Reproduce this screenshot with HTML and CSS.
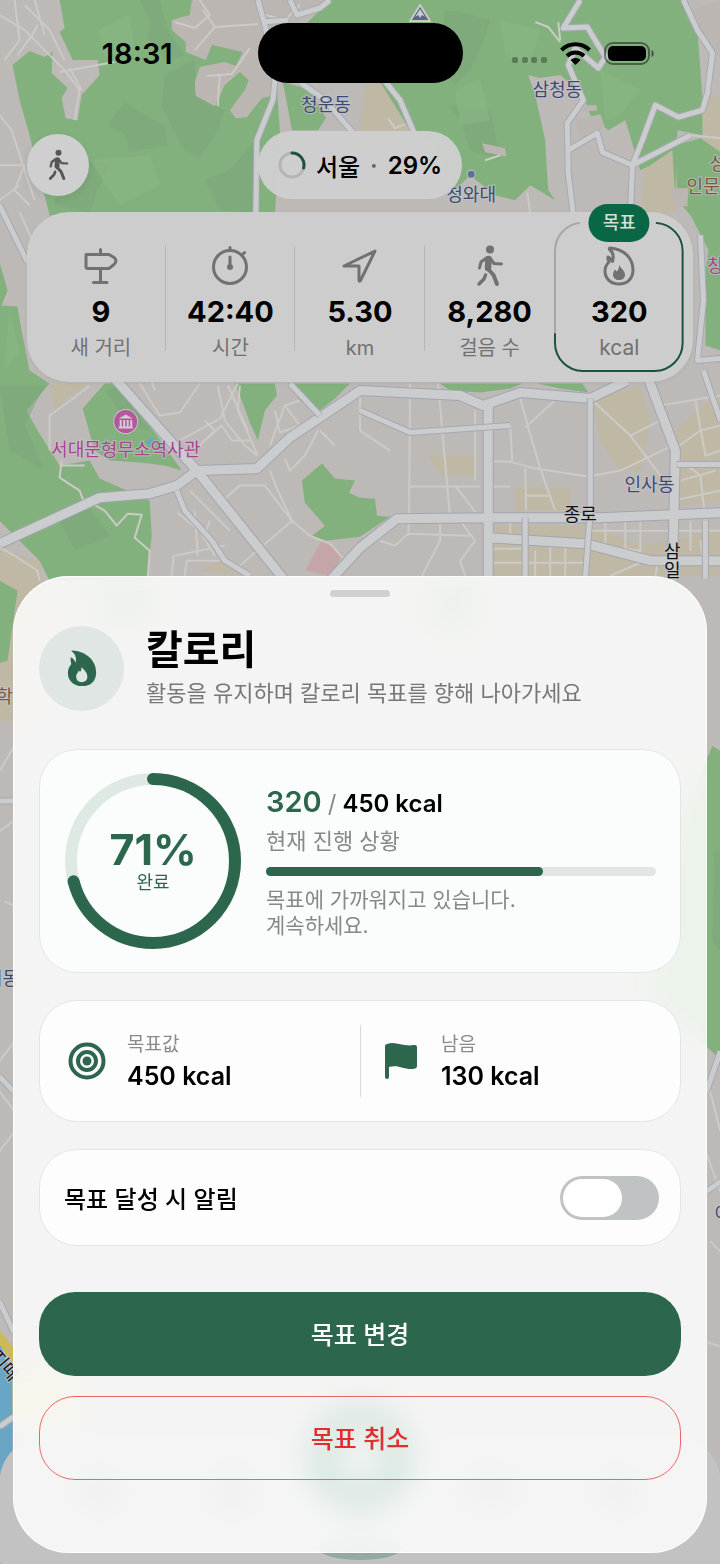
FILE: index.html
```html
<!DOCTYPE html>
<html lang="ko">
<head>
    <meta charset="UTF-8">
    <meta name="viewport" content="width=device-width, initial-scale=1.0">
    <title>칼로리 목표</title>
    <link rel="stylesheet" href="styles.css">
</head>
<body>
    <!-- Shared icon shapes -->
    <svg class="defs" width="0" height="0" aria-hidden="true">
        <symbol id="icon-walk" viewBox="0 0 28 42">
            <g fill="none" stroke="currentColor" stroke-linecap="round" stroke-linejoin="round">
                <path stroke-width="6.500" d="M12.500 14 L12 23"/>
                <path stroke-width="3" d="M10.500 13 L5 17 L3.500 23"/>
                <path stroke-width="3" d="M14 13 L18 18.500 L25.500 19"/>
                <path stroke-width="4" d="M12 24 L17.500 30 L21 39"/>
                <path stroke-width="3.500" d="M9.500 30 L8 34 L3 39"/>
            </g>
            <circle cx="14" cy="4.500" r="4" fill="currentColor"/>
        </symbol>
        <symbol id="icon-flame" viewBox="0 0 30 38">
            <path fill-rule="evenodd" d="M5 .500 C17 1 29.500 9 29.500 23 C29.500 32 24 37 15 37 C6 37 .500 31 .500 23.500 C.500 20 2 17 4 14.500 C3.500 12 3 9.500 3.500 7.500 C6 8.500 7.500 10.500 8.500 13 C9.500 9 8.500 4 4.500 1.500 C4 .900 4.300 .500 5 .500 Z M14.500 17.500 C14.500 20.500 14 21.500 13 22.500 C12.500 21.800 12 21.300 11.500 21 C11.300 23.500 9 24 9 27.500 C9 31 11.500 33 14.700 33 C18 33 20.500 31 20.500 27.500 C20.500 23 17.500 21 14.500 17.500 Z"/>
        </symbol>
    </svg>

    <!-- Map -->
    <svg class="map" viewBox="0 0 720 1564" preserveAspectRatio="xMidYMin slice" aria-hidden="true">
        <rect class="land" width="720" height="1564"/>
        <g class="block">
            <path d="M365 82 L385 82 L415 131 L360 131 Z M645 160 L675 150 L675 212 L640 212 Z M700 95 L720 95 L720 155 L702 145 Z"/>
            <path d="M50 383 L90 383 L70 395 L55 410 Z M428 455 L475 455 L476 475 L440 475 Z M515 487 L570 487 L570 510 L515 510 Z M592 400 L640 385 L650 420 L640 470 L620 470 L600 440 Z M675 430 L720 390 L720 500 L680 505 Z M490 525 L590 525 L640 545 L720 530 L720 575 L490 575 Z M0 548 L40 560 L50 640 L20 720 L0 720 Z M200 570 L220 560 L250 575 Z"/>
        </g>
        <g class="wood">
            <path d="M60 0 L65 28 L60 32 L73 60 L98 60 L100 75 L82 95 L78 120 L66 118 L62 98 L68 88 L52 73 L53 52 L45 57 L30 51 L13 65 L20 100 L30 135 L45 195 L50 215 L275 215 L280 130 L275 60 L262 0 Z"/>
            <path d="M330 0 L680 0 L697 30 L700 70 L702 100 L702 135 L677 130 L675 200 L672 150 L650 165 L640 170 L625 120 L608 130 L590 115 L583 95 L560 75 L540 78 L528 75 L535 95 L545 140 L546 160 L548 190 L555 200 L530 185 L515 200 L495 195 L470 175 L455 190 L430 140 L410 130 L380 82 L310 82 L300 30 Z"/>
            <path d="M675 145 L700 138 L720 152 L720 350 L705 345 L705 270 L708 250 L690 215 L677 200 Z"/>
            <path d="M283 82 L310 90 L326 118 L318 130 L292 130 Z"/>
            <path d="M0 262 L8 290 L2 305 L18 306 L22 330 L30 370 L50 383 L27 410 L38 430 L60 465 L90 460 L100 478 L150 500 L152 535 L147 580 L50 580 L40 560 L20 540 L0 520 Z"/>
            <path d="M83 408 L105 383 L120 383 L182 470 L165 465 L140 462 L110 460 L95 450 Z"/>
            <path d="M235 383 L275 383 L277 395 L265 410 L258 440 L250 422 L242 400 Z M288 383 L350 383 L335 398 L320 410 L300 400 Z"/>
            <path d="M302 480 L322 463 L335 478 L355 480 L349 492 L360 497 L375 498 L377 515 L390 516 L360 536 L325 540 L312 535 L325 525 L305 502 Z"/>
            <path d="M440 383 L522 383 L510 388 L480 392 L450 390 Z M537 383 L582 383 L588 392 L560 388 Z"/>
            <path d="M0 580 L18 590 L8 660 L0 662 Z M100 590 L150 590 L150 620 L100 620 Z M430 585 L475 585 L475 625 L430 625 Z M712 745 L720 750 L720 1058 L640 985 L660 970 L675 830 Z"/>
        </g>
        <g class="wood-shade">
            <path d="M125 102 L150 118 L165 125 L168 145 L150 148 L130 152 L126 135 L108 125 Z M165 75 L195 60 L195 95 L225 110 L218 130 L200 158 L185 150 L172 125 L162 105 Z M140 0 L150 20 L148 38 L165 60 L185 55 L168 30 L160 0 Z M445 10 L468 14 L490 20 L482 45 L470 70 L455 85 L432 60 L442 35 Z M450 105 L490 110 L500 160 L470 150 L462 125 Z M60 160 L85 158 L110 165 L98 190 L90 212 L55 205 Z M205 180 L230 170 L255 140 L255 212 L220 210 Z"/>
            <path d="M0 385 L45 385 L25 425 L45 470 L10 450 Z M60 520 L90 508 L110 535 L75 550 Z M105 390 L120 385 L150 430 L130 425 Z M714 850 L720 850 L720 950 L712 940 Z"/>
        </g>
        <g class="wood-light">
            <path d="M98 30 L130 15 L135 50 L105 58 Z M90 160 L150 155 L160 185 L120 205 Z M455 90 L480 80 L490 120 L460 125 Z M600 70 L640 90 L620 115 L605 120 Z M10 310 L20 350 L5 370 Z M500 20 L540 30 L530 65 L505 55 Z"/>
        </g>
        <g class="town">
            <path d="M192 0 L190 15 L172 20 L172 30 L186 42 L186 52 L206 60 L212 45 L243 52 L236 66 L225 62 L200 67 L195 82 L196 96 L215 106 L225 85 L240 72 L249 80 L245 90 L230 110 L236 118 L247 117 L262 98 L274 95 L270 30 L315 15 L330 0 Z"/>
            <path d="M482 143 L505 148 L506 156 L485 152 Z M585 105 L596 105 L597 110 L580 112 Z M575 120 L600 114 L605 128 L580 138 Z M686 12 L720 0 L720 60 L705 40 Z M670 188 L688 188 L687 206 L673 206 Z"/>
        </g>
        <path class="hospital" d="M305 570 L322 540 L343 553 L330 575 Z"/>
        <path class="water" d="M0 1340 L13 1375 L13 1564 L0 1564 Z M145 441 L154 437 L151 446 Z"/>
        <rect class="river-glow" x="13" y="1370" width="60" height="50"/>

        <g class="lane">
            <path d="M0 15 L25 30 L65 70 L80 90 L75 120 M15 0 L20 40 L5 60 M25 5 L50 30 L65 60 M35 0 L45 35 M60 72 L115 62 M82 90 L70 68 M0 115 L12 130 L35 200 M0 165 L25 165 L15 190 L30 205 M0 200 L20 185 M175 22 L195 28 L210 15 L200 0 M195 50 L215 27 L258 24 M215 27 L203 10 M207 76 L232 74 L250 48 M220 74 L218 106 M30 40 L38 25 M18 55 L30 38"/>
            <path d="M535 22 L548 27 L560 42 M558 22 L560 40 M265 15 L285 20 L300 5 M388 118 L395 128 L405 124 M485 160 L500 155 M690 135 L720 138 M527 192 L530 212 M20 212 L35 245 L25 260 M70 160 L60 175"/>
            <path d="M50 450 L50 415 L75 397 L90 385 M62 460 L60 477 L80 490 L83 498 L105 510 L117 525 L128 513 L142 514 L135 537 L150 550 L148 578 M60 465 L85 465 M0 547 L15 555 L38 570 L40 580"/>
            <path d="M140 383 L160 415 L180 412 L200 383 M155 390 L150 375 M180 440 L220 418 L238 383 M205 440 L222 425 L232 440 L250 440 M218 385 L225 420 L245 445 L258 455 M240 385 L238 410 L258 455 M228 385 L248 430 M200 445 L215 430 L205 420 M178 512 L200 530 L215 555 M190 490 L230 530 M195 510 L198 555 M172 575 L174 555 L225 545 M185 575 L187 560 L220 560 M210 520 L205 535 M225 498 L240 485 L265 485 L292 520 L310 535 L330 543 L343 557 M270 470 L278 490 L292 520 L240 565 M285 405 L300 400 M275 410 L280 432 L300 425 L285 405 L270 445 M320 430 L335 445 M318 430 L305 455 L290 470 L285 458"/>
            <path d="M360 430 L378 442 L390 450 M410 383 L409 518 M438 383 L450 518 M360 397 L360 430 M409 486 L480 486 M475 410 L475 480 M455 485 L475 511 M488 461 L510 461 L535 468 L588 476 L620 470 L672 445 M510 425 L512 460 M520 398 L528 427 L540 468 L555 510 M525 427 L560 395 M525 468 L526 510 M526 495 L550 495 M488 486 L510 486 M590 398 L630 435 L660 475 M630 435 L660 420 M660 405 L720 395 M672 450 L700 430 L720 425 M680 460 L700 475 L705 520 M680 480 L715 470 M672 500 L720 490 M695 400 L705 455 L720 450 M700 540 L705 575"/>
            <path d="M380 540 L395 545 L408 533 L470 535 M409 518 L408 535 M440 520 L440 540 L422 575 M460 520 L475 540 L460 560 L465 575 M510 517 L510 535 M525 520 L524 575 M605 520 L605 545 M625 520 L625 550 M590 530 L720 530 M600 545 L640 550 M640 520 L640 555 M535 550 L535 575 M550 545 L550 575 M565 545 L565 575 M490 548 L525 548 M490 562 L590 562 M610 575 L640 562 M690 520 L690 550 M655 575 L658 560"/>
            <path d="M0 770 L15 745 M0 830 L14 820 M5 900 L15 905 M0 1060 L15 1040 M0 1090 L15 1110 M0 1150 L15 1130 M707 1080 L720 1130 M705 1150 L720 1190 M710 1240 L720 1250 M706 1340 L720 1345"/>
        </g>

        <g class="road-edge">
            <path d="M0 543 L100 497 L150 493 L177 485 L197 470 L257 468 L290 437 L320 417 L360 390 L460 395 L483 405 L520 392 L590 398 L627 380 M115 378 L197 470 L285 580 M488 405 L488 580 M330 580 L360 547 L397 518 L488 517 L600 517 L720 512 M648 378 L675 450 L672 580 M488 537 L585 543 L650 560 L720 560"/>
        </g>
        <g class="road-fill">
            <path d="M0 543 L100 497 L150 493 L177 485 L197 470 L257 468 L290 437 L320 417 L360 390 L460 395 L483 405 L520 392 L590 398 L627 380 M115 378 L197 470 L285 580 M488 405 L488 580 M330 580 L360 547 L397 518 L488 517 L600 517 L720 512 M648 378 L675 450 L672 580 M488 537 L585 543 L650 560 L720 560"/>
        </g>
        <g class="street-edge">
            <path d="M258 0 L265 25 L275 80 L273 100 L257 140 L256 215 M288 20 L262 22 M290 0 L297 15 L320 8 L330 0 M300 82 L325 100 L355 135 M380 75 L400 100 L415 135 M580 0 L563 28 L587 27 L605 57 L598 68 L575 48 L568 65 L583 100 L567 123 L568 173 L573 215 M683 0 L697 30 L712 53 L707 93 L702 110 L678 117 L655 105 L642 140 L632 165 L630 215 M568 150 L597 133 L602 152 L632 165 L690 135 M0 205 L28 262 M700 235 L703 300 L697 360 L720 358 M290 383 L320 415 M177 490 L185 510 L212 540 L225 560 L250 575 M360 410 L410 432 L510 425 M590 398 L590 510 L585 578 M525 517 L525 578 M676 464 L720 464 M705 520 L705 578 M703 370 L720 420 M0 800 L14 800 M0 1075 L14 1090 M0 1300 L14 1330 M720 1050 L706 1090 M706 1190 L720 1180 M0 1425 L14 1415"/>
        </g>
        <g class="street-fill">
            <path d="M258 0 L265 25 L275 80 L273 100 L257 140 L256 215 M288 20 L262 22 M290 0 L297 15 L320 8 L330 0 M300 82 L325 100 L355 135 M380 75 L400 100 L415 135 M580 0 L563 28 L587 27 L605 57 L598 68 L575 48 L568 65 L583 100 L567 123 L568 173 L573 215 M683 0 L697 30 L712 53 L707 93 L702 110 L678 117 L655 105 L642 140 L632 165 L630 215 M568 150 L597 133 L602 152 L632 165 L690 135 M0 205 L28 262 M700 235 L703 300 L697 360 L720 358 M290 383 L320 415 M177 490 L185 510 L212 540 L225 560 L250 575 M360 410 L410 432 L510 425 M590 398 L590 510 L585 578 M525 517 L525 578 M676 464 L720 464 M705 520 L705 578 M703 370 L720 420 M0 800 L14 800 M0 1075 L14 1090 M0 1300 L14 1330 M720 1050 L706 1090 M706 1190 L720 1180 M0 1425 L14 1415"/>
        </g>
        <path class="highway" d="M-4 1330 L20 1362"/>

        <g class="place">
            <text x="326" y="111">청운동</text>
            <text x="557" y="96">삼청동</text>
            <text x="471" y="201">청와대</text>
            <text x="649" y="490">인사동</text>
            <text x="3" y="984">리동</text>
            <text x="722" y="1218">이</text>
        </g>
        <g class="place campus">
            <text x="734" y="170">성균관</text>
            <text x="711" y="193">인문사</text>
            <text x="5" y="702">학</text>
        </g>
        <g class="place poi">
            <text x="126" y="455">서대문형무소역사관</text>
            <text x="715" y="272">창</text>
        </g>
        <g class="place street-name">
            <text x="580" y="520">종로</text>
            <text x="672" y="557">삼</text>
            <text x="672" y="576">일</text>
            <text x="5" y="1370" transform="rotate(50 5 1364)">지떼</text>
        </g>
        <circle cx="471" cy="174" r="4" fill="#5d7290" stroke="#bfc2bf"/>
        <path d="M420 5 L430 21 L410 21 Z" fill="#566882" stroke="#c8cccb" stroke-width="2" stroke-linejoin="round"/>
        <path d="M420 9 L425 17 L422 15 L420 18 L418 15 L415 17 Z" fill="#c8cccb"/>
        <circle cx="126" cy="421" r="12" fill="#b4579f" stroke="#cdbfc9"/>
        <path d="M119 418 L126 414 L133 418 Z M120 419.500 H122 V426 H120 Z M123.500 419.500 H125.500 V426 H123.500 Z M127 419.500 H129 V426 H127 Z M130.500 419.500 H132.500 V426 H130.500 Z M119 426 H133 V428 H119 Z" fill="#d6cbd3"/>

        <!-- Tab bar that shows through the sheet -->
        <rect class="tabbar" x="0" y="1436" width="720" height="160" rx="44"/>
        <g class="tabbar-icons">
            <rect x="80" y="1470" width="40" height="40" rx="16"/>
            <rect x="212" y="1470" width="40" height="40" rx="8"/>
            <rect x="465" y="1470" width="48" height="34" rx="8"/>
            <rect x="600" y="1470" width="36" height="40" rx="12"/>
        </g>
        <circle class="tabbar-main" cx="360" cy="1455" r="56"/>
        <rect x="345" y="1435" width="30" height="40" rx="10" fill="#cccccc"/>
        <ellipse cx="360" cy="1546" rx="42" ry="12" fill="#93aaa0"/>
    </svg>

    <div class="screen">
        <div class="status-bar">
            <span class="time">18:31</span>
            <span class="island"></span>
            <svg class="status-icons" width="144" height="28" viewBox="0 0 144 28" aria-hidden="true">
                <g fill="#000" opacity=".3">
                    <rect x="1" y="18" width="6" height="6" rx="2"/><rect x="11" y="18" width="6" height="6" rx="2"/>
                    <rect x="20" y="18" width="6" height="6" rx="2"/><rect x="30" y="18" width="6" height="6" rx="2"/>
                </g>
                <g fill="none" stroke="#000" stroke-width="4">
                    <path d="M50.500 11 A20 20 0 0 1 78.500 11"/>
                    <path d="M56 17 A12 12 0 0 1 73 17"/>
                </g>
                <path d="M64.500 26 L59.500 21 A7 7 0 0 1 69.500 21 Z"/>
                <rect x="94" y="4" width="44" height="21" rx="8" fill="none" stroke="#000" stroke-opacity=".45" stroke-width="2"/>
                <rect x="97" y="7" width="38" height="15" rx="5"/>
                <path d="M140.500 11 C143.500 12 143.500 17 140.500 18 Z" opacity=".5"/>
            </svg>
        </div>

        <div class="map-controls">
            <button class="round-btn" type="button" aria-label="걷기">
                <svg width="21" height="32"><use href="#icon-walk"/></svg>
            </button>
            <div class="city-pill">
                <svg width="28" height="28" viewBox="0 0 28 28" fill="none" stroke-width="3" aria-hidden="true">
                    <circle cx="14" cy="14" r="12" stroke="#b3b5b5"/>
                    <path d="M14 2 A12 12 0 0 1 25.600 17" stroke="#1d523d" stroke-linecap="round"/>
                </svg>
                <span class="city">서울</span><span class="dot">·</span><span>29%</span>
            </div>
        </div>

        <div class="stats">
            <div class="stat">
                <svg width="40" height="40" viewBox="0 0 40 40" aria-hidden="true">
                    <path d="M5 8.500 H28 L33 11.500 Q37 14.500 33 18.500 L28 22.500 H7 Q5 22.500 5 20.500 V10.500 Q5 8.500 7 8.500 M19.500 8 V3.500 M19.500 23 V36 M12.500 36.500 H26"/>
                </svg>
                <strong>9</strong>
                <span>새 거리</span>
            </div>
            <div class="stat">
                <svg width="40" height="40" viewBox="0 0 40 40" aria-hidden="true">
                    <circle cx="20" cy="21" r="16.500"/>
                    <path d="M20 4 V1.500 M32.500 8.500 L34.500 6.500 M20 11 V20"/>
                    <circle class="solid" cx="20" cy="21" r="3"/>
                </svg>
                <strong>42:40</strong>
                <span>시간</span>
            </div>
            <div class="stat">
                <svg width="40" height="40" viewBox="0 0 40 40" aria-hidden="true">
                    <path d="M35 5 L4 20 H19 V34.500 Q19.500 36 20.500 34.500 Z"/>
                </svg>
                <strong>5.30</strong>
                <span>km</span>
            </div>
            <div class="stat">
                <svg class="glyph" width="28" height="42" aria-hidden="true"><use href="#icon-walk"/></svg>
                <strong>8,280</strong>
                <span>걸음 수</span>
            </div>
            <div class="stat goal">
                <svg width="40" height="40" viewBox="0 0 40 40" aria-hidden="true">
                    <path d="M11 2 C25 3 34 12 34 24 C34 33 28 38 20 38 C11 38 6 32 6 25 C6 21 8 18 10 16 Q8.500 13 9 11 Q11.500 12 13.500 15.500 C15 10 14 6 10.500 3.500 Q10 2.300 11 2 Z"/>
                    <path class="solid" d="M20 18.500 C21 22 26 24 26 29 C26 32 23.500 34 20 34 C16.500 34 14 32 14 28.500 C14 26 15.500 25 15.500 23.500 Q17 24 17.500 25.500 Q20.500 23 20 18.500 Z"/>
                </svg>
                <strong>320</strong>
                <span>kcal</span>
                <svg class="goal-outline" viewBox="0 0 130 150" preserveAspectRatio="none" aria-hidden="true">
                    <path class="rest" d="M1 112 V29 A28 28 0 0 1 25 1"/>
                    <path class="done" d="M103 1 A28 28 0 0 1 129 29 V121 A28 28 0 0 1 101 149 H29 A28 28 0 0 1 1 121 V112"/>
                </svg>
                <em class="goal-badge">목표</em>
            </div>
        </div>

        <main class="sheet">
            <div class="handle"></div>

            <header class="sheet-header">
                <div class="sheet-icon"><svg width="30" height="37"><use href="#icon-flame"/></svg></div>
                <div>
                    <h1>칼로리</h1>
                    <p>활동을 유지하며 칼로리 목표를 향해 나아가세요</p>
                </div>
            </header>

            <section class="card progress-card">
                <div class="ring">
                    <svg viewBox="0 0 178 178" aria-hidden="true">
                        <circle class="ring-track" cx="89" cy="89" r="82"/>
                        <circle class="ring-value" cx="89" cy="89" r="82" pathLength="100" stroke-dasharray="71 100" transform="rotate(-90 89 89)"/>
                    </svg>
                    <div class="ring-text"><strong>71%</strong><span>완료</span></div>
                </div>
                <div class="progress-info">
                    <p class="amount"><b>320</b> <i>/</i> 450 kcal</p>
                    <p class="caption">현재 진행 상황</p>
                    <div class="bar"><div class="bar-fill" style="width: 71%"></div></div>
                    <p class="hint">목표에 가까워지고 있습니다.<br>계속하세요.</p>
                </div>
            </section>

            <section class="card values-card">
                <div class="value">
                    <svg width="38" height="38" viewBox="0 0 38 38" fill="none" stroke="currentColor" stroke-width="4" aria-hidden="true">
                        <circle cx="19" cy="19" r="16.500"/><circle cx="19" cy="19" r="9"/>
                        <circle cx="19" cy="19" r="4.500" fill="currentColor" stroke="none"/>
                    </svg>
                    <div><span>목표값</span><strong>450 kcal</strong></div>
                </div>
                <div class="value">
                    <svg width="38" height="38" viewBox="0 0 38 38" fill="currentColor" aria-hidden="true">
                        <path d="M3 4 Q3 2.500 5 2 C14 -1.500 20 5 32 3 Q35 2.500 35 5 V24 Q35 26 33 26.500 C23 29 18 22 7 25 V35 Q7 37 5 37 Q3 37 3 35 Z"/>
                    </svg>
                    <div><span>남음</span><strong>130 kcal</strong></div>
                </div>
            </section>

            <section class="card notify-card">
                <label for="goalNotify">목표 달성 시 알림</label>
                <input type="checkbox" role="switch" id="goalNotify" class="switch">
            </section>

            <div class="actions">
                <button class="change-btn" type="button">목표 변경</button>
                <button class="cancel-btn" type="button">목표 취소</button>
            </div>
        </main>
    </div>
</body>
</html>
```

FILE: styles.css
```css
* { box-sizing: border-box; }
body { margin: 0; position: relative; background: #bcb8b5; color: #000; font-family: Inter, "Noto Sans CJK KR", sans-serif; font-size: 22px; }
h1, p { margin: 0; }
button { font-family: inherit; cursor: pointer; }
.defs { position: absolute; }

/* Map */
.map { position: absolute; left: 0; top: 0; width: 100%; height: 100%; }
.land { fill: #bdb9b7; }
.block { fill: #bfb8a5; }
.town { fill: #bcb6b3; }
.wood { fill: #83b17e; }
.wood-shade { fill: #7ba377; opacity: 0.5; }
.wood-light { fill: #8ab886; opacity: 0.6; }
.water { fill: #69a5c4; }
.river-glow { fill: #cfc98a; }
.hospital { fill: #c5a5a8; }
.lane { fill: none; stroke: #cbcac7; stroke-width: 2; stroke-linejoin: round; }
.road-edge, .road-fill, .street-edge, .street-fill { fill: none; stroke-linejoin: round; }
.road-edge { stroke: #a2a5b0; stroke-width: 11; }
.road-fill { stroke: #cbccce; stroke-width: 9; }
.street-edge { stroke: #a6a9b2; stroke-width: 7; }
.street-fill { stroke: #cbccce; stroke-width: 5; }
.highway { stroke: #cdb957; stroke-width: 9; }
.place { font-size: 18px; text-anchor: middle; fill: #3d4a70; stroke: #c6c8cb; stroke-width: 2; stroke-opacity: 0.7; paint-order: stroke; }
.campus { fill: #805640; }
.poi { fill: #a84291; }
.street-name { fill: #111; }
.tabbar { fill: #c2c2c3; }
.tabbar-icons { fill: #a2a2a2; }
.tabbar-main { fill: #2c7656; }

/* Status bar */
.screen { position: relative; min-height: 100vh; padding: 23px 13px 13px; }
.status-bar { display: grid; grid-template-columns: 1fr 205px 1fr; align-items: center; padding: 0 14px; }
.time { font-size: 29px; font-weight: 600; text-align: center; padding-right: 10px; }
.island { height: 60px; border-radius: 30px; background: #000; }
.status-icons { justify-self: end; margin-right: 38px; }

/* Controls over the map */
.map-controls { display: grid; grid-template-columns: 1fr auto 1fr; align-items: center; margin: 48px 14px 0; }
.round-btn { width: 62px; height: 62px; padding: 0; border: none; border-radius: 50%; background: #cfcfcf; color: #555; display: flex; align-items: center; justify-content: center; box-shadow: 0 2px 8px rgba(0,0,0,0.08); }
.city-pill { display: flex; align-items: center; gap: 10px; height: 68px; padding: 0 20px; border-radius: 34px; background: rgba(207,207,207,0.94); font-size: 24px; font-weight: 600; }
.city-pill .city { font-weight: 500; }
.city-pill .dot { color: #666; }

.stats { display: grid; grid-template-columns: repeat(5, 1fr); margin: 13px 14px 0; padding: 10px 9px; border-radius: 42px; background: #cdcdcd; box-shadow: 0 1px 4px rgba(0,0,0,0.06); }
.stat { position: relative; display: flex; flex-direction: column; align-items: center; height: 150px; padding-top: 23px; color: #717171; }
.stat svg { height: 42px; flex: none; fill: none; stroke: currentColor; stroke-width: 3; stroke-linecap: round; stroke-linejoin: round; }
.stat .glyph { stroke: none; }
.stat .solid { fill: currentColor; stroke: none; }
.stat strong { margin-top: 10px; font-size: 29px; line-height: 30px; font-weight: 700; color: #000; }
.stat span { margin-top: 8px; font-size: 20px; line-height: 26px; }
.goal span { font-size: 21px; }
/* Thin rule between the plain stats */
.stat:nth-child(-n+3)::after { content: ""; position: absolute; right: 0; top: 24px; bottom: 21px; width: 1px; background: #b5b5b5; }
.stat .goal-outline { position: absolute; left: 0; top: 0; width: 100%; height: 100%; stroke-width: 2; overflow: visible; }
.goal-outline .rest { stroke: #a5a7a6; }
.goal-outline .done { stroke: #1d523d; }
.goal-badge { position: absolute; top: -18px; left: 50%; transform: translateX(-50%); padding: 0 14px; border-radius: 19px; background: #0a6746; color: #d5ded9; font-size: 18px; line-height: 38px; font-style: normal; font-weight: 500; white-space: nowrap; }

/* Sheet */
.sheet { margin-top: 194px; padding: 14px 26px 73px; border-radius: 56px; background: rgba(255,255,255,0.84); -webkit-backdrop-filter: blur(14px); backdrop-filter: blur(14px); box-shadow: inset 0 0 0 1px rgba(255,255,255,0.8); }
.handle { width: 60px; height: 7px; margin: 0 auto; border-radius: 4px; background: #d1d0d0; }
.sheet-header { display: flex; align-items: center; gap: 22px; margin: 28px 0 37px; }
.sheet-icon { flex: none; width: 85px; height: 85px; border-radius: 50%; background: #e0e6e3; display: flex; align-items: center; justify-content: center; }
.sheet-icon svg { fill: #2c674d; }
.sheet-header h1 { font-size: 40px; line-height: 50px; font-weight: 700; }
.sheet-header p { line-height: 37px; color: #777; }

.card { margin-bottom: 27px; border: 1px solid #dfe7e3; border-radius: 38px; background: #fdfdfd; }
.progress-card { display: flex; align-items: center; gap: 24px; padding: 22px 24px; background: #fafdfc; }
.ring { position: relative; flex: none; width: 178px; height: 178px; }
.ring svg { display: block; fill: none; stroke-width: 12; }
.ring-track { stroke: #dfe9e4; }
.ring-value { stroke: #2c674d; stroke-linecap: round; }
.ring-text { position: absolute; inset: 0; display: flex; flex-direction: column; align-items: center; justify-content: center; color: #2c674d; }
.ring-text strong { font-size: 43px; line-height: 44px; font-weight: 700; }
.ring-text span { font-size: 18px; line-height: 24px; }
.progress-info { flex: 1; }
.amount { font-size: 24px; line-height: 36px; font-weight: 600; }
.amount b { font-size: 29px; font-weight: 600; color: #2c674d; }
.amount i { font-style: normal; font-weight: 400; color: #888; }
.caption { line-height: 38px; color: #888; }
.bar { height: 9px; margin: 7px 0 11px; border-radius: 5px; background: #e1e6e4; }
.bar-fill { height: 100%; border-radius: 5px; background: #2c674d; }
.hint { font-size: 21px; line-height: 26px; color: #888; }

.values-card { display: grid; grid-template-columns: 1fr 1fr; padding: 24px 0; }
.value { display: flex; align-items: center; gap: 21px; height: 72px; padding-left: 28px; color: #2c674d; }
.value + .value { padding-left: 21px; border-left: 1px solid #d8dad9; }
.value div { display: flex; flex-direction: column; }
.value span { font-size: 19px; line-height: 30px; color: #8a8a8a; }
.value strong { font-size: 25px; line-height: 32px; font-weight: 600; color: #000; }

.notify-card { display: flex; align-items: center; justify-content: space-between; height: 97px; padding: 0 21px 0 24px; }
.notify-card label { font-size: 24px; font-weight: 500; }
.switch { -webkit-appearance: none; appearance: none; width: 99px; height: 44px; margin: 0; padding: 3px; border-radius: 22px; background: #c0c3c4; cursor: pointer; }
.switch::before { content: ""; display: block; width: 59px; height: 38px; border-radius: 19px; background: #fff; }
.switch:checked { background: #2c674d; }
.switch:checked::before { margin-left: auto; }

.actions { display: flex; flex-direction: column; gap: 20px; margin-top: 46px; }
.actions button { height: 84px; padding: 0 0 2px; border-radius: 36px; font-size: 25px; font-weight: 500; }
.change-btn { border: none; background: #2c674d; color: #fff; }
.cancel-btn { border: 1px solid #ee6464; background: transparent; color: #df2f2f; }
```
